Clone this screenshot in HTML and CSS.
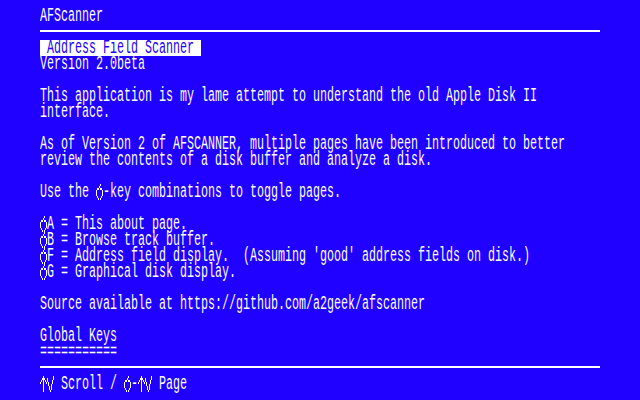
FILE: index.html
```html
<!DOCTYPE html>
<html>
<head>
<meta charset="utf-8">
<title>AFScanner</title>
<link rel="stylesheet" href="styles.css">
</head>
<body>
<div class="screen">
  <div class="text">
    <div class="row">AFScanner</div>
    <div class="rule"></div>
    <div class="row"><span class="inv"> Address Field Scanner </span></div>
    <div class="row">Version 2.0beta</div>
    <div class="row"></div>
    <div class="row">This application is my lame attempt to understand the old Apple Disk II</div>
    <div class="row">interface.</div>
    <div class="row"></div>
    <div class="row">As of Version 2 of AFSCANNER, multiple pages have been introduced to better</div>
    <div class="row">review the contents of a disk buffer and analyze a disk.</div>
    <div class="row"></div>
    <div class="row">Use the <svg class="mt" viewBox="0 0 7 16" preserveAspectRatio="none" shape-rendering="crispEdges"><path d="M4 0h1v2h-1zM3 2h1v2h-1zM1 4h2v2h-2zM4 4h2v2h-2zM0 6h1v6h-1zM6 6h1v6h-1zM1 12h1v2h-1zM5 12h1v2h-1zM2 14h1v2h-1zM4 14h1v2h-1z"/></svg>-key combinations to toggle pages.</div>
    <div class="row"></div>
    <div class="row"><svg class="mt" viewBox="0 0 7 16" preserveAspectRatio="none" shape-rendering="crispEdges"><path d="M4 0h1v2h-1zM3 2h1v2h-1zM1 4h2v2h-2zM4 4h2v2h-2zM0 6h1v6h-1zM6 6h1v6h-1zM1 12h1v2h-1zM5 12h1v2h-1zM2 14h1v2h-1zM4 14h1v2h-1z"/></svg>A = This about page.</div>
    <div class="row"><svg class="mt" viewBox="0 0 7 16" preserveAspectRatio="none" shape-rendering="crispEdges"><path d="M4 0h1v2h-1zM3 2h1v2h-1zM1 4h2v2h-2zM4 4h2v2h-2zM0 6h1v6h-1zM6 6h1v6h-1zM1 12h1v2h-1zM5 12h1v2h-1zM2 14h1v2h-1zM4 14h1v2h-1z"/></svg>B = Browse track buffer.</div>
    <div class="row"><svg class="mt" viewBox="0 0 7 16" preserveAspectRatio="none" shape-rendering="crispEdges"><path d="M4 0h1v2h-1zM3 2h1v2h-1zM1 4h2v2h-2zM4 4h2v2h-2zM0 6h1v6h-1zM6 6h1v6h-1zM1 12h1v2h-1zM5 12h1v2h-1zM2 14h1v2h-1zM4 14h1v2h-1z"/></svg>F = Address field display.  (Assuming 'good' address fields on disk.)</div>
    <div class="row"><svg class="mt" viewBox="0 0 7 16" preserveAspectRatio="none" shape-rendering="crispEdges"><path d="M4 0h1v2h-1zM3 2h1v2h-1zM1 4h2v2h-2zM4 4h2v2h-2zM0 6h1v6h-1zM6 6h1v6h-1zM1 12h1v2h-1zM5 12h1v2h-1zM2 14h1v2h-1zM4 14h1v2h-1z"/></svg>G = Graphical disk display.</div>
    <div class="row"></div>
    <div class="row">Source available at https://github.com/a2geek/afscanner</div>
    <div class="row"></div>
    <div class="row">Global Keys</div>
    <div class="row">===========</div>
    <div class="rule"></div>
    <div class="row"><svg class="mt2" viewBox="0 0 14 16" preserveAspectRatio="none" shape-rendering="crispEdges"><path d="M3 0h1v16h-1zM2 2h1v2h-1zM4 2h1v2h-1zM1 4h1v2h-1zM5 4h1v2h-1zM0 6h1v2h-1zM6 6h1v2h-1zM7 2h1v4h-1zM8 6h1v4h-1zM9 10h1v4h-1zM10 14h1v2h-1zM13 0h1v4h-1zM12 4h1v4h-1zM11 8h1v6h-1z"/></svg> Scroll / <svg class="mt" viewBox="0 0 7 16" preserveAspectRatio="none" shape-rendering="crispEdges"><path d="M4 0h1v2h-1zM3 2h1v2h-1zM1 4h2v2h-2zM4 4h2v2h-2zM0 6h1v6h-1zM6 6h1v6h-1zM1 12h1v2h-1zM5 12h1v2h-1zM2 14h1v2h-1zM4 14h1v2h-1z"/></svg>-<svg class="mt2" viewBox="0 0 14 16" preserveAspectRatio="none" shape-rendering="crispEdges"><path d="M3 0h1v16h-1zM2 2h1v2h-1zM4 2h1v2h-1zM1 4h1v2h-1zM5 4h1v2h-1zM0 6h1v2h-1zM6 6h1v2h-1zM7 2h1v4h-1zM8 6h1v4h-1zM9 10h1v4h-1zM10 14h1v2h-1zM13 0h1v4h-1zM12 4h1v4h-1zM11 8h1v6h-1z"/></svg> Page</div>
  </div>
</div>
</body>
</html>
```
FILE: styles.css
```css
html, body {
  margin: 0;
  padding: 0;
  width: 640px;
  height: 400px;
  overflow: hidden;
  background: #2000ff;
}

.screen {
  padding: 8px 0 0 40px;
  color: #ffffff;
}

.text {
  width: 960px;
  font-family: "Liberation Mono", "DejaVu Sans Mono", monospace;
  font-size: 20px;
  line-height: 16px;
  transform: scaleX(0.583333);
  transform-origin: 0 0;
}

.row {
  height: 16px;
  white-space: pre;
}

.inv {
  display: inline-block;
  height: 16px;
  line-height: 16px;
  vertical-align: top;
  background: #ffffff;
  color: #2000ff;
}

.rule {
  height: 2px;
  margin: 6px 0 8px;
  background: #ffffff;
}

.mt, .mt2 {
  display: inline-block;
  height: 16px;
  vertical-align: top;
  fill: #ffffff;
}

.mt { width: 12px; }
.mt2 { width: 24px; }
```
